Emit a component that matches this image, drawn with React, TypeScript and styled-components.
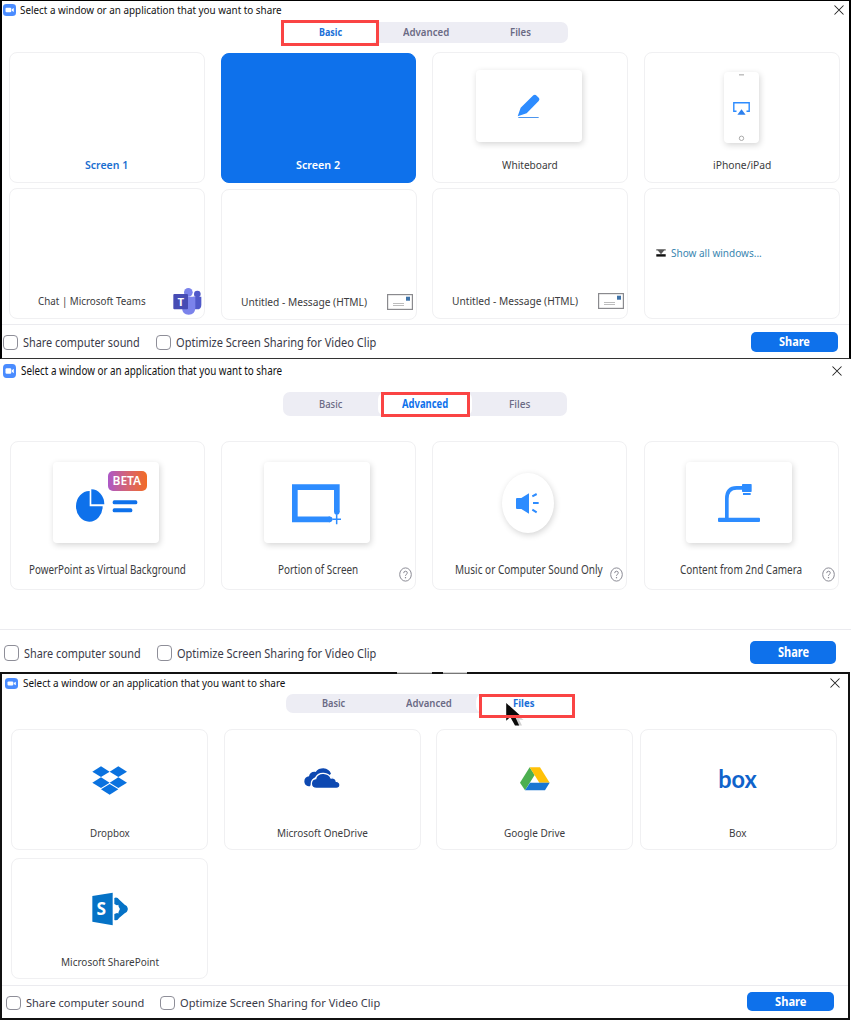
import React, { useLayoutEffect, useRef, useState } from "react";
import styled, { createGlobalStyle, css } from "styled-components";

const GlobalStyle = createGlobalStyle`
  * { box-sizing: border-box; }
  body {
    margin: 0;
    background: #fff;
    font-family: "Noto Sans", "Open Sans", sans-serif;
    color: #333;
    overflow: hidden;
  }
  svg { display: block; flex: none; }
`;

/* ---------- text that is condensed to a given width ---------- */

const FitBox = styled.span<{ $w: number }>`
  display: inline-block;
  flex: none;
  width: ${(p) => p.$w}px;
  white-space: nowrap;
  text-align: left;
`;
const FitInner = styled.span`
  display: inline-block;
  transform-origin: 0 50%;
`;

function Fit({ w, children }: { w: number; children: string }) {
  const ref = useRef<HTMLSpanElement>(null);
  const [scale, setScale] = useState(1);
  useLayoutEffect(() => {
    if (ref.current) setScale(w / ref.current.offsetWidth);
  }, [w, children]);
  return (
    <FitBox $w={w}>
      <FitInner ref={ref} style={{ transform: `scaleX(${scale})` }}>
        {children}
      </FitInner>
    </FitBox>
  );
}

/* ---------- dialog frame ---------- */

const Page = styled.main`
  width: 851px;
  height: 1020px;
  background: #fff;
`;

const Dialog = styled.section<{ $h: number; $frame?: "first" | "last" }>`
  position: relative;
  display: flex;
  flex-direction: column;
  width: 851px;
  height: ${(p) => p.$h}px;
  background: #fff;
  ${(p) =>
    p.$frame === "first" &&
    css`
      border: solid #000;
      border-width: 1px 2px 1px 2px;
      border-bottom-color: #333;
    `}
  ${(p) =>
    p.$frame === "last" &&
    css`
      width: 850px;
      border: solid #111;
      border-width: 2px 2px 2px 2px;
    `}
`;

const TitleBar = styled.header<{ $h: number; $pl: number; $pr: number; $gap: number; $size: number }>`
  display: flex;
  align-items: center;
  flex: none;
  height: ${(p) => p.$h}px;
  padding: 0 ${(p) => p.$pr}px 0 ${(p) => p.$pl}px;
  gap: ${(p) => p.$gap}px;
  font-size: ${(p) => p.$size}px;
  line-height: 16px;
  color: #111;
`;
const Spacer = styled.div`
  flex: 1;
`;

const TabBar = styled.nav<{ $ml: number; $mt: number; $h: number; $size: number; $w: number }>`
  position: relative;
  display: flex;
  flex: none;
  width: ${(p) => p.$w}px;
  height: ${(p) => p.$h}px;
  margin: ${(p) => p.$mt}px 0 0 ${(p) => p.$ml}px;
  border-radius: 7px;
  background: #ededf4;
  font-size: ${(p) => p.$size}px;
  line-height: 16px;
`;
const Tab = styled.div<{ $active?: boolean; $bold?: boolean }>`
  flex: 1;
  display: flex;
  align-items: center;
  justify-content: center;
  padding-bottom: ${(p) => (p.$bold ? 2 : 0)}px;
  border-radius: 7px;
  font-weight: ${(p) => (p.$bold ? 600 : 500)};
  color: ${(p) => (p.$active ? (p.$bold ? "#1a6fd8" : "#0e71eb") : "#6a6a84")};
  background: ${(p) => (p.$active ? "#fff" : "transparent")};
  ${(p) => p.$active && "font-weight: 700;"}
`;
const Highlight = styled.div<{ $x: number; $y: number; $w: number; $h: number }>`
  position: absolute;
  left: ${(p) => p.$x}px;
  top: ${(p) => p.$y}px;
  width: ${(p) => p.$w}px;
  height: ${(p) => p.$h}px;
  border: 3px solid #fa4444;
`;
const CursorSlot = styled.div`
  position: absolute;
  left: 219px;
  top: 9px;
`;

const Grid = styled.div<{ $mt: number; $ml: number; $cols: string; $row: number; $gapX: number; $gapY: number }>`
  display: grid;
  flex: none;
  margin: ${(p) => p.$mt}px 0 0 ${(p) => p.$ml}px;
  grid-template-columns: ${(p) => p.$cols};
  grid-auto-rows: ${(p) => p.$row}px;
  column-gap: ${(p) => p.$gapX}px;
  row-gap: ${(p) => p.$gapY}px;
`;
const Card = styled.article<{ $selected?: boolean; $size: number; $pb: number; $shift?: number }>`
  position: relative;
  display: flex;
  flex-direction: column;
  align-items: center;
  min-width: 0;
  margin-top: ${(p) => p.$shift ?? 0}px;
  margin-bottom: ${(p) => -(p.$shift ?? 0)}px;
  padding-bottom: ${(p) => p.$pb}px;
  border: 1px solid ${(p) => (p.$selected ? "#0e71eb" : "#f0f0f2")};
  border-radius: 8px;
  background: ${(p) => (p.$selected ? "#0e71eb" : "#fff")};
  color: #3c3c40;
  font-size: ${(p) => p.$size}px;
  ${(p) => p.$selected && "margin: 1px 1px 0 0;"}
`;
const Art = styled.div<{ $mt: number; $mr?: number }>`
  margin-top: ${(p) => p.$mt}px;
  margin-right: ${(p) => p.$mr ?? 0}px;
`;
const Label = styled.div<{ $tone?: "link" | "inverse"; $mr?: number }>`
  margin-top: auto;
  margin-right: ${(p) => p.$mr ?? 0}px;
  line-height: 16px;
  ${(p) => p.$tone === "link" && "color: #1a6fd0; font-weight: 600;"}
  ${(p) => p.$tone === "inverse" && "color: #fff; font-weight: 600;"}
`;
const WindowLabel = styled.div<{ $gap: number; $pr: number }>`
  display: flex;
  align-items: center;
  justify-content: flex-end;
  align-self: stretch;
  height: 28px;
  margin-top: auto;
  padding-right: ${(p) => p.$pr}px;
  gap: ${(p) => p.$gap}px;
  line-height: 16px;
`;
const ShowAll = styled.div`
  display: flex;
  align-items: center;
  align-self: stretch;
  gap: 5px;
  height: 16px;
  margin-top: 56px;
  padding-left: 11px;
  line-height: 16px;
  color: #3a86b0;
`;
const Tile = styled.div<{ $w: number; $h: number; $round?: boolean }>`
  position: relative;
  display: flex;
  align-items: center;
  justify-content: center;
  width: ${(p) => p.$w}px;
  height: ${(p) => p.$h}px;
  border-radius: ${(p) => (p.$round ? "50%" : "4px")};
  background: #fff;
  box-shadow: 1px 2px 6px rgba(0, 0, 0, 0.17);
`;
const Beta = styled.span`
  position: absolute;
  left: 55px;
  top: 9px;
  width: 39px;
  height: 20px;
  border-radius: 5px;
  background: linear-gradient(90deg, #ac58c8, #d9656b 55%, #f26c25);
  color: #fff;
  font-size: 12px;
  font-weight: 600;
  line-height: 20px;
  padding-left: 5px;
`;
const HelpSlot = styled.div`
  position: absolute;
  right: 3px;
  bottom: 7px;
`;

const Footer = styled.footer<{ $h: number; $pl: number; $pr: number; $size: number; $pt?: number }>`
  display: flex;
  align-items: center;
  flex: none;
  height: ${(p) => p.$h}px;
  margin-top: auto;
  padding: ${(p) => p.$pt ?? 0}px ${(p) => p.$pr}px 0 ${(p) => p.$pl}px;
  border-top: 1px solid #ebebef;
  font-size: ${(p) => p.$size}px;
  line-height: 18px;
  color: #3a3a48;
`;
const Check = styled.label<{ $mr: number }>`
  display: flex;
  align-items: center;
  gap: 5px;
  margin-right: ${(p) => p.$mr}px;
`;
const Box = styled.i<{ $h: number }>`
  flex: none;
  width: 15px;
  height: ${(p) => p.$h}px;
  border: 1px solid #8e8e98;
  border-radius: 4px;
  background: #fff;
`;
const ShareButton = styled.button<{ $h: number; $size: number; $w: number }>`
  display: flex;
  align-items: center;
  justify-content: center;
  width: ${(p) => p.$w}px;
  height: ${(p) => p.$h}px;
  margin-bottom: 2px;
  padding: 0;
  border: 0;
  border-radius: 5px;
  background: #0e71eb;
  color: #fff;
  font: 700 ${(p) => p.$size}px/16px "Noto Sans", "Open Sans", sans-serif;
`;
const TopGap = styled.div`
  position: absolute;
  left: 395px;
  top: -2px;
  display: flex;
  gap: 11px;
  width: 70px;
  height: 2px;
  background: #111;
  i { background: #d4d4d4; height: 2px; border-bottom: 1px solid #777; }
  i:first-child { width: 35px; }
  i:last-child { width: 24px; }
`;

/* ---------- drawings ---------- */

const ZoomIcon = ({ h }: { h: number }) => (
  <svg width="13" height={h} viewBox="0 0 13 13" preserveAspectRatio="none">
    <rect width="13" height="13" rx="3.6" fill="#4a8cff" />
    <rect x="2.5" y="4" width="5.8" height="5" rx="1.2" fill="#fff" />
    <path d="M8.8 5.8 10.8 4.3V8.7L8.8 7.2Z" fill="#fff" />
  </svg>
);
const CloseIcon = () => (
  <svg width="10" height="10" viewBox="0 0 10 10" stroke="#222" strokeWidth="1.05">
    <path d="M.5.5 9.5 9.5M9.5.5.5 9.5" />
  </svg>
);
const PencilIcon = () => (
  <svg width="23" height="25" viewBox="292 285 69 75">
    <path
      d="M294 352 303 326 341 289Q346 285 351 290L358 297Q361 301 357 306L321 343Z"
      fill="#2d8cff"
    />
    <path d="M296 355.5H357" stroke="#4c95ee" strokeWidth="3" />
  </svg>
);
const PhoneScreen = () => (
  <svg width="35" height="71" viewBox="0 0 35 71" fill="none">
    <path d="M15 2.8h5" stroke="#bbb" strokeWidth="1.4" />
    <circle cx="17.5" cy="66.3" r="2.2" stroke="#aaa" />
    <path d="M12.5 39.3H9.8V30.7H25.2V39.3H22.5" stroke="#2d8cff" strokeWidth="1.4" />
    <path d="M17.5 37.3 21.6 42.7H13.4Z" fill="#2d80ee" />
  </svg>
);
const TeamsIcon = () => (
  <svg width="29" height="28" viewBox="519 321 87 84">
    <circle cx="592" cy="342" r="10" fill="#5059c9" />
    <path d="M580 350H604V374Q604 388 591 388H580Z" fill="#5059c9" />
    <circle cx="565" cy="337" r="13" fill="#7b83eb" />
    <path d="M546 350H586V383Q585 404 566 404Q547 404 546 383Z" fill="#7b83eb" />
    <rect x="520" y="342" width="44" height="46" rx="3" fill="#474cb4" />
    <text x="542" y="377" fontSize="34" fontWeight="700" fill="#fff" textAnchor="middle">T</text>
  </svg>
);
const MailIcon = () => (
  <svg width="26" height="16" viewBox="0 0 26 16" fill="none">
    <rect x=".6" y=".6" width="24.8" height="14.8" stroke="#8a8a8e" strokeWidth="1.2" />
    <rect x="19" y="2.7" width="4" height="4" fill="#3f73a8" />
    <path d="M6 9.5H17M6 11.5H17" stroke="#bdbdbd" />
  </svg>
);
const ShowAllIcon = () => (
  <svg width="10" height="8" viewBox="0 0 10 8">
    <path d="M.3.3H9.7V1.6H8.2L5 5.2 1.8 1.6H.3Z" fill="#555" />
    <rect x=".3" y="5.2" width="9.4" height="2.4" fill="#111" />
  </svg>
);
const ChartIcon = () => (
  <svg width="62" height="33" viewBox="227 326 186 99">
    <path d="M268 332A40 46 0 1 0 307 378H268Z" fill="#0e71eb" />
    <path d="M273 327A39 45 0 0 1 312 372H273Z" fill="#0e71eb" />
    <rect x="337" y="360" width="74" height="12" rx="5" fill="#0e71eb" />
    <rect x="337" y="384" width="59" height="12" rx="5" fill="#0e71eb" />
  </svg>
);
const ChartSlot = styled.div`
  padding: 5px 0 0 2px;
`;
const PortionIcon = () => (
  <svg width="49" height="41" viewBox="879 311 147 123">
    <path d="M1013.500 396V320.500H887.500V417H993" fill="none" stroke="#2d8cff" strokeWidth="17" />
    <circle cx="1013.500" cy="395" r="8" fill="#2d8cff" />
    <circle cx="992" cy="417" r="8.500" fill="#2d8cff" />
    <path d="M1013 402V432M1000 417H1026" stroke="#2d8cff" strokeWidth="4.500" />
  </svg>
);
const PortionSlot = styled.div`
  padding-top: 3px;
`;
const SpeakerIcon = () => (
  <svg width="23" height="21" viewBox="286 337 69 63">
    <path d="M289 352H302L325 338V399L302 385H289Q286 385 286 382V355Q286 352 289 352Z" fill="#2d8cff" />
    <path d="M335 347 348 340M337 367H354M335 387 348 395" stroke="#2d8cff" strokeWidth="6" />
  </svg>
);
const CameraIcon = () => (
  <svg width="42" height="38" viewBox="891 312 126 114">
    <rect x="891" y="413" width="126" height="13" rx="3" fill="#2d8cff" />
    <path d="M917.500 414V356Q917.500 323.500 947 323.500H965" fill="none" stroke="#2d8cff" strokeWidth="11" />
    <rect x="963" y="312" width="29" height="24" rx="2" fill="#2d8cff" />
    <rect x="966" y="339" width="23" height="6" fill="#2d8cff" />
  </svg>
);
const HelpIcon = () => (
  <svg width="13" height="15" viewBox="0 0 13 15" fill="none">
    <ellipse cx="6.500" cy="7.500" rx="5.800" ry="6.600" stroke="#8a8a94" />
    <path d="M4.700 6.100Q4.700 4.200 6.500 4.200T8.300 5.900Q8.300 6.800 7.300 7.400 6.500 7.900 6.500 8.800" stroke="#8a8a94" />
    <rect x="5.900" y="10" width="1.200" height="1.300" fill="#8a8a94" />
  </svg>
);
const DropboxIcon = () => (
  <svg width="35" height="29" viewBox="276 437 105 87" fill="#0a72df">
    <path d="M303 438 329 454 303 470 277 454Z" />
    <path d="M355 438 381 454 355 470 329 454Z" />
    <path d="M303 471 329 487 303 503 277 487Z" />
    <path d="M355 471 381 487 355 503 329 487Z" />
    <path d="M329 491 355 507 329 523 303 507Z" />
  </svg>
);
const OneDriveIcon = () => (
  <svg width="36" height="21" viewBox="913 445 108 63" fill="#0d48b1">
    <path d="M931 500C920 500 914 494 914 485C914 476 920 471 928 470C929 461 938 455 948 457C953 449 962 446 971 446C983 447 991 453 994 462L985 470C965 463 938 470 938 485Z" />
    <path
      d="M951 506C941 506 935 500 935 492C935 483 941 478 948 477C949 467 960 460 972 461C984 462 991 468 994 475C1001 473 1009 477 1010 485C1017 486 1021 490 1021 496C1021 502 1017 506 1010 506Z"
      stroke="#fff"
      strokeWidth="4"
    />
  </svg>
);
const DriveIcon = () => (
  <svg width="30" height="24" viewBox="297 440 90 72">
    <path d="M326 441 341 464 312 510 297 487Z" fill="#4caf50" />
    <path d="M326 441H357L386 487H355Z" fill="#ffc107" />
    <path d="M327 487H386L372 510H312Z" fill="#1976d2" />
  </svg>
);
const BoxIcon = () => (
  <svg width="42" height="34" viewBox="-2 -5 42 34">
    <text x="-.8" y="20.500" fontSize="25.500" fontWeight="700" fontFamily="Lato, sans-serif" fill="#0f63cb" textLength="38.500" lengthAdjust="spacingAndGlyphs">
      box
    </text>
  </svg>
);
const SharePointIcon = () => (
  <svg width="36" height="34" viewBox="278 127 108 102" fill="#0572c6">
    <path d="M279 139 340 129V227L279 216Z" />
    <text x="306" y="196" fontSize="52" fontWeight="700" fill="#fff" textAnchor="middle">S</text>
    <path d="M345 145Q353 141 360 150L377 166 385 178 377 190 360 204Q353 215 345 211V193L355 189 361 180 355 168 345 163Z" />
    <path d="M345 168 351 168 357 165 358 172 363 178 358 184 357 192 351 188 345 188Z" fill="#fff" />
    <circle cx="373" cy="178" r="12" />
  </svg>
);
const CursorIcon = () => (
  <svg width="20" height="23" viewBox="0 0 20 23">
    <path d="M5 5 18.500 17 14 16.500 17 22.500H12L7 17.500Z" fill="#888" opacity=".4" />
    <path d="M1.200 0V17.800L5.300 14 10 22.500H14.200L10 13.500 16 13.200Z" fill="#0a0a0a" />
  </svg>
);

/* ---------- dialogs ---------- */

interface TabsProps {
  x: number; top: number; h: number; size: number; w: number; active: number; widths: number[];
  bold?: boolean; mark: [number, number, number, number]; cursor?: boolean;
}
function Tabs({ x, top, h, size, w, active, widths, bold, mark, cursor }: TabsProps) {
  return (
    <TabBar $ml={x} $mt={top} $h={h} $size={size} $w={w}>
      {["Basic", "Advanced", "Files"].map((name, i) => (
        <Tab key={name} $active={i === active} $bold={bold}>
          <Fit w={widths[i]}>{name}</Fit>
        </Tab>
      ))}
      {cursor && <CursorSlot><CursorIcon /></CursorSlot>}
      <Highlight $x={mark[0]} $y={mark[1]} $w={mark[2]} $h={mark[3]} />
    </TabBar>
  );
}

interface ActionsProps {
  h: number; pl: number; pr: number; size: number; box: number; btn: [number, number, number]; pt?: number; w: [number, number];
}
function Actions({ h, pl, pr, size, box, btn, pt, w }: ActionsProps) {
  return (
    <Footer $h={h} $pl={pl} $pr={pr} $size={size} $pt={pt}>
      <Check $mr={16}><Box $h={box} /><Fit w={w[0]}>Share computer sound</Fit></Check>
      <Check $mr={0}><Box $h={box} /><Fit w={w[1]}>Optimize Screen Sharing for Video Clip</Fit></Check>
      <Spacer />
      <ShareButton $w={btn[0]} $h={btn[1]} $size={btn[2]}><Fit w={31}>Share</Fit></ShareButton>
    </Footer>
  );
}

const TITLE = "Select a window or an application that you want to share";

function BasicDialog() {
  const c = { $size: 11, $pb: 9 };
  return (
    <Dialog $h={359} $frame="first">
      <TitleBar $h={17} $pl={1} $pr={5} $gap={4} $size={11}>
        <ZoomIcon h={12} /><Fit w={262}>{TITLE}</Fit><Spacer /><CloseIcon />
      </TitleBar>
      <Tabs x={281} top={4} h={21} w={285} size={10.5} active={0} bold widths={[23, 46, 21]} mark={[-2, -2, 98, 26]} />
      <Grid $mt={9} $ml={7} $cols="repeat(4, 196px)" $row={131} $gapX={15.7} $gapY={5}>
        <Card {...c}><Label $tone="link" $mr={2}><Fit w={43}>Screen 1</Fit></Label></Card>
        <Card {...c} $selected><Label $tone="inverse" $mr={1}><Fit w={44}>Screen 2</Fit></Label></Card>
        <Card {...c}>
          <Art $mt={17} $mr={3}><Tile $w={106} $h={72}><PencilIcon /></Tile></Art>
          <Label><Fit w={56}>Whiteboard</Fit></Label>
        </Card>
        <Card {...c}>
          <Art $mt={19} $mr={2}><Tile $w={35} $h={71}><PhoneScreen /></Tile></Art>
          <Label><Fit w={58}>iPhone/iPad</Fit></Label>
        </Card>
        <Card {...c} $pb={3}>
          <WindowLabel $gap={27} $pr={2}><Fit w={108}>Chat | Microsoft Teams</Fit><TeamsIcon /></WindowLabel>
        </Card>
        <Card {...c} $pb={3} $shift={1}>
          <WindowLabel $gap={20} $pr={3}><Fit w={126}>Untitled - Message (HTML)</Fit><MailIcon /></WindowLabel>
        </Card>
        <Card {...c} $pb={3}>
          <WindowLabel $gap={20} $pr={3}><Fit w={126}>Untitled - Message (HTML)</Fit><MailIcon /></WindowLabel>
        </Card>
        <Card {...c}><ShowAll><ShowAllIcon /><Fit w={91}>Show all windows...</Fit></ShowAll></Card>
      </Grid>
      <Actions h={34} pl={1} pr={11} size={12} box={15} btn={[87, 20, 12]} w={[117, 200]} pt={2} />
    </Dialog>
  );
}

function AdvancedDialog() {
  const c = { $size: 12, $pb: 11 };
  return (
    <Dialog $h={313}>
      <TitleBar $h={24} $pl={3} $pr={9} $gap={5} $size={12}>
        <ZoomIcon h={14} /><Fit w={261}>{TITLE}</Fit><Spacer /><CloseIcon />
      </TitleBar>
      <Tabs x={283} top={9} h={24} w={284} size={11.5} active={1} widths={[23, 46, 21]} mark={[98, 0, 89, 25]} />
      <Grid $mt={25} $ml={10} $cols="repeat(4, 195px)" $row={149} $gapX={16.2} $gapY={0}>
        <Card {...c}>
          <Art $mt={20} $mr={4}><Tile $w={106} $h={81}><ChartSlot><ChartIcon /></ChartSlot><Beta><Fit w={29}>BETA</Fit></Beta></Tile></Art>
          <Label $mr={1}><Fit w={157}>PowerPoint as Virtual Background</Fit></Label>
        </Card>
        <Card {...c}>
          <Art $mt={20} $mr={4}><Tile $w={106} $h={81}><PortionSlot><PortionIcon /></PortionSlot></Tile></Art>
          <Label $mr={2}><Fit w={80}>Portion of Screen</Fit></Label>
          <HelpSlot><HelpIcon /></HelpSlot>
        </Card>
        <Card {...c}>
          <Art $mt={31} $mr={4}><Tile $w={52} $h={60} $round><SpeakerIcon /></Tile></Art>
          <Label $mr={2}><Fit w={148}>Music or Computer Sound Only</Fit></Label>
          <HelpSlot><HelpIcon /></HelpSlot>
        </Card>
        <Card {...c}>
          <Art $mt={20} $mr={4}><Tile $w={106} $h={81}><CameraIcon /></Tile></Art>
          <Label $mr={1}><Fit w={122}>Content from 2nd Camera</Fit></Label>
          <HelpSlot><HelpIcon /></HelpSlot>
        </Card>
      </Grid>
      <Actions h={43} pl={4} pr={15} size={13} box={16} btn={[86, 23, 13.5]} w={[117, 199]} pt={4} />
    </Dialog>
  );
}

function FilesDialog() {
  const c = { $size: 10.5, $pb: 8 };
  return (
    <Dialog $h={348} $frame="last">
      <TopGap><i /><i /></TopGap>
      <TitleBar $h={18} $pl={3} $pr={8} $gap={5} $size={10.5}>
        <ZoomIcon h={11} /><Fit w={262}>{TITLE}</Fit><Spacer /><CloseIcon />
      </TitleBar>
      <Tabs x={284} top={2} h={19} w={285} size={10} active={2} bold widths={[23, 46, 21]} mark={[193, 0, 96, 24]} cursor />
      <Grid $mt={16} $ml={9} $cols="197px 197px 197px 197px" $row={121} $gapX={15.5} $gapY={8}>
        <Card {...c}><Art $mt={36}><DropboxIcon /></Art><Label><Fit w={40}>Dropbox</Fit></Label></Card>
        <Card {...c}><Art $mt={38}><OneDriveIcon /></Art><Label><Fit w={91}>Microsoft OneDrive</Fit></Label></Card>
        <Card {...c}><Art $mt={37}><DriveIcon /></Art><Label><Fit w={61}>Google Drive</Fit></Label></Card>
        <LastColumn>
          <Card {...c}><Art $mt={32}><BoxIcon /></Art><Label><Fit w={18}>Box</Fit></Label></Card>
        </LastColumn>
        <Card {...c}><Art $mt={33}><SharePointIcon /></Art><Label><Fit w={98}>Microsoft SharePoint</Fit></Label></Card>
      </Grid>
      <Actions h={33} pl={4} pr={14} size={11.5} box={14} btn={[87, 19, 11.5]} w={[118, 200]} pt={1} />
    </Dialog>
  );
}
const LastColumn = styled.div`
  display: grid;
  margin-left: -9px;
  margin-right: 9px;
`;

export default function App() {
  return (
    <Page>
      <GlobalStyle />
      <BasicDialog />
      <AdvancedDialog />
      <FilesDialog />
    </Page>
  );
}
